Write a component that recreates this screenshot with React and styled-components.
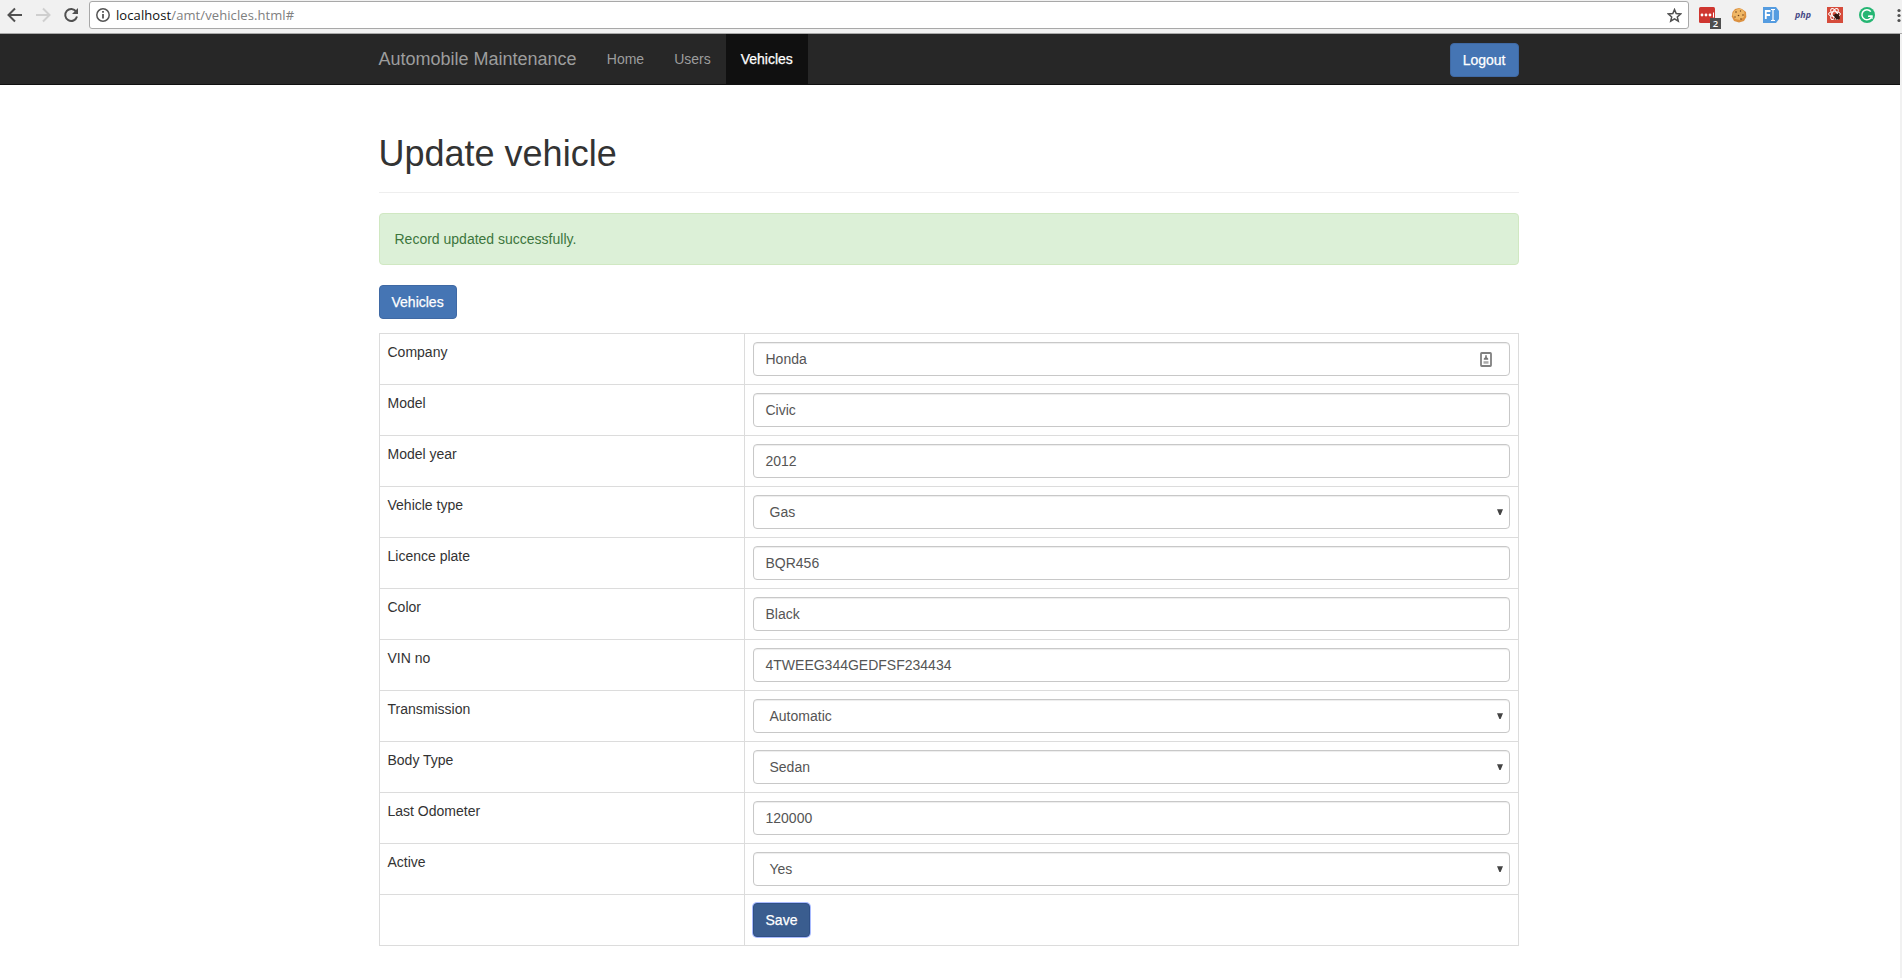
import React from "react";
import styled, { createGlobalStyle, css } from "styled-components";

const Global = createGlobalStyle`
  * { box-sizing: border-box; }
  html, body { margin: 0; height: 100%; overflow: hidden; }
  body {
    font-family: "Liberation Sans", Arial, sans-serif;
    font-size: 14px;
    line-height: 20px;
    color: #333;
    background: #fff;
  }
`;

const Screen = styled.div`
  display: flex;
  flex-direction: column;
  height: 978px;
  width: 1902px;
`;

const BrowserBar = styled.div`
  display: flex;
  align-items: flex-start;
  height: 34px;
  flex: none;
  background: #f1f1f1;
  border-bottom: 1px solid #a9a9a9;
  overflow: hidden;
`;

const NavIcons = styled.div`
  display: flex;
  gap: 12px;
  padding: 7px 11px 0 7px;
  width: 89px;
  flex: none;
  svg { flex: none; }
`;

const AddressBar = styled.div`
  display: flex;
  align-items: center;
  width: 1600px;
  height: 28px;
  margin-top: 1px;
  padding: 0 6px;
  flex: none;
  background: #fff;
  border: 1px solid #a8a8a8;
  border-radius: 3px;
`;

const Url = styled.span`
  flex: 1;
  margin-left: 6px;
  font-family: "Open Sans", "Noto Sans", sans-serif;
  font-size: 13px;
  letter-spacing: 0.09px;
  line-height: 18px;
  color: #808080;
  b { font-weight: 400; color: #111; }
`;

const Extensions = styled.div`
  display: flex;
  gap: 16px;
  padding: 7px 0 0 10px;
  flex: none;
  svg { flex: none; overflow: visible; }
  svg:last-child { margin-left: 6px; }
`;

const Body = styled.div`
  display: flex;
  flex: 1;
  min-height: 0;
`;

const Page = styled.div`
  width: 1900px;
  flex: none;
`;

const ScrollTrack = styled.div`
  flex: 1;
  background: #f1f1f1;
`;

const Container = styled.div`
  width: 1140px;
  margin: 0 0 0 379px;
`;

const Navbar = styled.nav`
  height: 51px;
  background: #272727;
  border-bottom: 1px solid #101010;
`;

const NavInner = styled(Container)`
  display: flex;
  height: 50px;
  align-items: stretch;
`;

const Brand = styled.span`
  font-size: 18px;
  line-height: 50px;
  color: #9d9d9d;
  margin-right: 15.5px;
  text-indent: -0.5px;
`;

const NavLink = styled.a`
  padding: 0 15.3px 0 14.7px;
  line-height: 50px;
  color: ${(p) => (p.$active ? "#fff" : "#9d9d9d")};
  background: ${(p) => (p.$active ? "#101010" : "transparent")};
  -webkit-text-stroke: ${(p) => (p.$active ? "0.25px #fff" : "0")};
`;

const Button = styled.button`
  height: 34px;
  padding: 6px 12.5px 6px 11.5px;
  font: 14px/20px "Liberation Sans", Arial, sans-serif;
  color: #fff;
  background: #4575b4;
  border: 1px solid #3f69a4;
  border-radius: 4px;
  display: block;
  -webkit-text-stroke: 0.25px #fff;
  ${(p) =>
    p.$focused &&
    css`
      width: 57px;
      padding: 6px 11px;
      background: #3a5d8f;
      border-color: #2f5086;
      box-shadow: 0 0 0 1px #a9bbff;
    `}
`;

const Logout = styled(Button)`
  margin: 9px 0 0 auto;
`;

const Title = styled.h1`
  margin: 0;
  padding: 49px 0 18px;
  font-size: 36px;
  line-height: 40px;
  font-weight: 400;
  text-indent: -0.5px;
  border-bottom: 1px solid #eee;
`;

const Alert = styled.div`
  height: 52px;
  margin: 20px 0;
  padding: 15px 14.5px;
  color: #3c763d;
  background: #dcf0d7;
  border: 1px solid #d0e8c2;
  border-radius: 4px;
`;

const Form = styled.div`
  margin-top: 14px;
  border: 1px solid #dcdcdc;
  border-bottom: 0;
`;

const Row = styled.div`
  display: grid;
  grid-template-columns: 365px 1fr;
  height: 51px;
  border-bottom: 1px solid #dcdcdc;
`;

const Label = styled.div`
  padding: 8px 7.5px;
  border-right: 1px solid #dcdcdc;
`;

const Cell = styled.div`
  padding: 8px;
`;

const Field = styled.div`
  display: flex;
  align-items: center;
  justify-content: space-between;
  height: 34px;
  padding: ${(p) => (p.$select ? "0 6px 0 15.5px" : "0 17px 0 11.5px")};
  color: #555;
  border: 1px solid #c8c8c8;
  border-radius: 4px;
  box-shadow: inset 0 1px 1px rgba(0, 0, 0, 0.075);
`;

const rows = [
  { label: "Company", value: "Honda", card: true },
  { label: "Model", value: "Civic" },
  { label: "Model year", value: "2012" },
  { label: "Vehicle type", value: "Gas", select: true },
  { label: "Licence plate", value: "BQR456" },
  { label: "Color", value: "Black" },
  { label: "VIN no", value: "4TWEEG344GEDFSF234434" },
  { label: "Transmission", value: "Automatic", select: true },
  { label: "Body Type", value: "Sedan", select: true },
  { label: "Last Odometer", value: "120000" },
  { label: "Active", value: "Yes", select: true },
];

const Arrow = ({ color, flip }) => (
  <svg width="16" height="16" viewBox="0 0 16 16" fill="none" stroke={color} strokeWidth="2">
    <path d={flip ? "M1 8H14M8 1.5L14.5 8L8 14.5" : "M15 8H2M8 1.5L1.5 8L8 14.5"} />
  </svg>
);

const Reload = () => (
  <svg width="16" height="16" viewBox="0 0 16 16" fill="none" stroke="#505050" strokeWidth="2">
    <path d="M13.2 4.6A6 6 0 1 0 14 9.6" />
    <path d="M15 1v6H9z" fill="#505050" stroke="none" />
  </svg>
);

const Info = () => (
  <svg width="14" height="14" viewBox="0 0 14 14" fill="none" stroke="#555">
    <circle cx="7" cy="7" r="6.2" strokeWidth="1.5" />
    <path d="M7 6v4.5M7 3v1.8" strokeWidth="1.8" />
  </svg>
);

const Star = () => (
  <svg width="15" height="15" viewBox="0 0 15 15" fill="none" stroke="#505050" strokeWidth="1.5">
    <path d="M7.5 1.6L9.2 5.6L13.6 6L10.3 8.9L11.3 13.2L7.5 10.9L3.7 13.2L4.7 8.9L1.4 6L5.8 5.6Z" />
  </svg>
);

const Passwords = () => (
  <svg width="16" height="16" viewBox="0 0 16 16">
    <rect width="16" height="16" rx="1.5" fill="#cf3630" />
    <g fill="#fff">
      <circle cx="3" cy="8" r="1.4" />
      <circle cx="7" cy="8" r="1.4" />
      <circle cx="11" cy="8" r="1.4" />
      <rect x="14" y="5.5" width="1" height="5" />
    </g>
    <rect x="11" y="11" width="11" height="11" fill="#4f4f4f" />
    <text x="16.5" y="20" textAnchor="middle" fontSize="9.5" fontWeight="600" fill="#fff" fontFamily="Open Sans, sans-serif">2</text>
  </svg>
);

const Cookie = () => (
  <svg width="16" height="16" viewBox="0 0 16 16">
    <path d="M8 1L11 2L15 5L15.3 10L13 14L8 15.5L3 14L.8 9.5L1.5 5L4 2Z" fill="#dc9140" />
    <path d="M8 1.5L11 2.5L13.5 5L13 10L9 13L4 12L1.5 8L3 4Z" fill="#efb765" />
    <g fill="#70401b">
      <circle cx="5" cy="5" r=".8" />
      <circle cx="9.5" cy="4" r=".7" />
      <circle cx="12" cy="8" r=".8" />
      <circle cx="7.5" cy="8.5" r=".8" />
      <circle cx="4" cy="10" r=".7" />
      <circle cx="10" cy="12" r=".8" />
    </g>
  </svg>
);

const FormFill = () => (
  <svg width="16" height="16" viewBox="0 0 16 16">
    <path d="M0 0H13L16 4V12L13 16H0Z" fill="#559ce0" />
    <g fill="none" stroke="#fff">
      <path d="M2.8 12V4H7.5M3 8H7" strokeWidth="1.8" />
      <path d="M8 2.5H9.5L10 3.5L10.5 2.5H12M10 3.5V12.5M8 13.5H9.5L10 12.5L10.5 13.5H12" strokeWidth="1.2" />
    </g>
  </svg>
);

const Php = () => (
  <svg width="16" height="16" viewBox="0 0 16 16">
    <text x="8" y="10.5" textAnchor="middle" textLength="16" lengthAdjust="spacingAndGlyphs" fontSize="9" fontWeight="700" fontStyle="italic" fill="#484b87" fontFamily="Open Sans, sans-serif">php</text>
  </svg>
);

const ReactBug = () => (
  <svg width="16" height="16" viewBox="0 0 16 16">
    <rect width="16" height="16" fill="#d64c3b" />
    <g fill="none" stroke="#fff" strokeWidth="1">
      <ellipse cx="7.5" cy="7" rx="6" ry="2.4" />
      <ellipse cx="7.5" cy="7" rx="6" ry="2.4" transform="rotate(60 7.5 7)" />
      <ellipse cx="7.5" cy="7" rx="6" ry="2.4" transform="rotate(120 7.5 7)" />
    </g>
    <ellipse cx="10" cy="9.5" rx="2.2" ry="3.2" transform="rotate(-40 10 9.5)" fill="#2d1712" />
    <path d="M6 8l7 4M7 12l5-6M9 13l3-6" stroke="#2d1712" strokeWidth=".8" />
  </svg>
);

const Grammar = () => (
  <svg width="16" height="16" viewBox="0 0 16 16" fill="none" stroke="#fff">
    <circle cx="8" cy="8" r="8" fill="#25b673" stroke="none" />
    <path d="M11.8 4.6A5 5 0 1 0 12.7 9.2H9" strokeWidth="1.5" />
    <path d="M10.4 9.2H13V12" strokeWidth="1.2" />
  </svg>
);

const Menu = () => (
  <svg width="4" height="16" viewBox="0 0 4 16" fill="#505050">
    <circle cx="2" cy="3.5" r="1.6" />
    <circle cx="2" cy="8.5" r="1.6" />
    <circle cx="2" cy="13.5" r="1.6" />
  </svg>
);

const ContactCard = () => (
  <svg width="12" height="15" viewBox="0 0 12 15">
    <rect x="1" y="1" width="10" height="13" rx=".7" fill="#fff" stroke="#808080" strokeWidth="1.8" />
    <path d="M5.2 3.2h1.6v2l1.4 1.3v1.2H3.8V6.5l1.4-1.3z" fill="#777" />
    <path d="M3.5 9.2h5v2.5h-5z" fill="#aaa" />
  </svg>
);

const Caret = () => (
  <svg width="6" height="6" viewBox="0 0 6 6">
    <path d="M0 .3H6L3.6 6H2.4Z" fill="#444" />
  </svg>
);

export default function App() {
  return (
    <Screen>
      <Global />
      <BrowserBar>
        <NavIcons>
          <Arrow color="#505050" />
          <Arrow color="#cfcfcf" flip />
          <Reload />
        </NavIcons>
        <AddressBar>
          <Info />
          <Url><b>localhost</b>/amt/vehicles.html#</Url>
          <Star />
        </AddressBar>
        <Extensions>
          <Passwords />
          <Cookie />
          <FormFill />
          <Php />
          <ReactBug />
          <Grammar />
          <Menu />
        </Extensions>
      </BrowserBar>
      <Body>
        <Page>
          <Navbar>
            <NavInner>
              <Brand>Automobile Maintenance</Brand>
              <NavLink>Home</NavLink>
              <NavLink>Users</NavLink>
              <NavLink $active>Vehicles</NavLink>
              <Logout>Logout</Logout>
            </NavInner>
          </Navbar>
          <Container>
            <Title>Update vehicle</Title>
            <Alert>Record updated successfully.</Alert>
            <Button>Vehicles</Button>
            <Form>
              {rows.map((r) => (
                <Row key={r.label}>
                  <Label>{r.label}</Label>
                  <Cell>
                    <Field $select={r.select}>
                      {r.value}
                      {r.card && <ContactCard />}
                      {r.select && <Caret />}
                    </Field>
                  </Cell>
                </Row>
              ))}
              <Row>
                <Label />
                <Cell><Button $focused>Save</Button></Cell>
              </Row>
            </Form>
          </Container>
        </Page>
        <ScrollTrack />
      </Body>
    </Screen>
  );
}
